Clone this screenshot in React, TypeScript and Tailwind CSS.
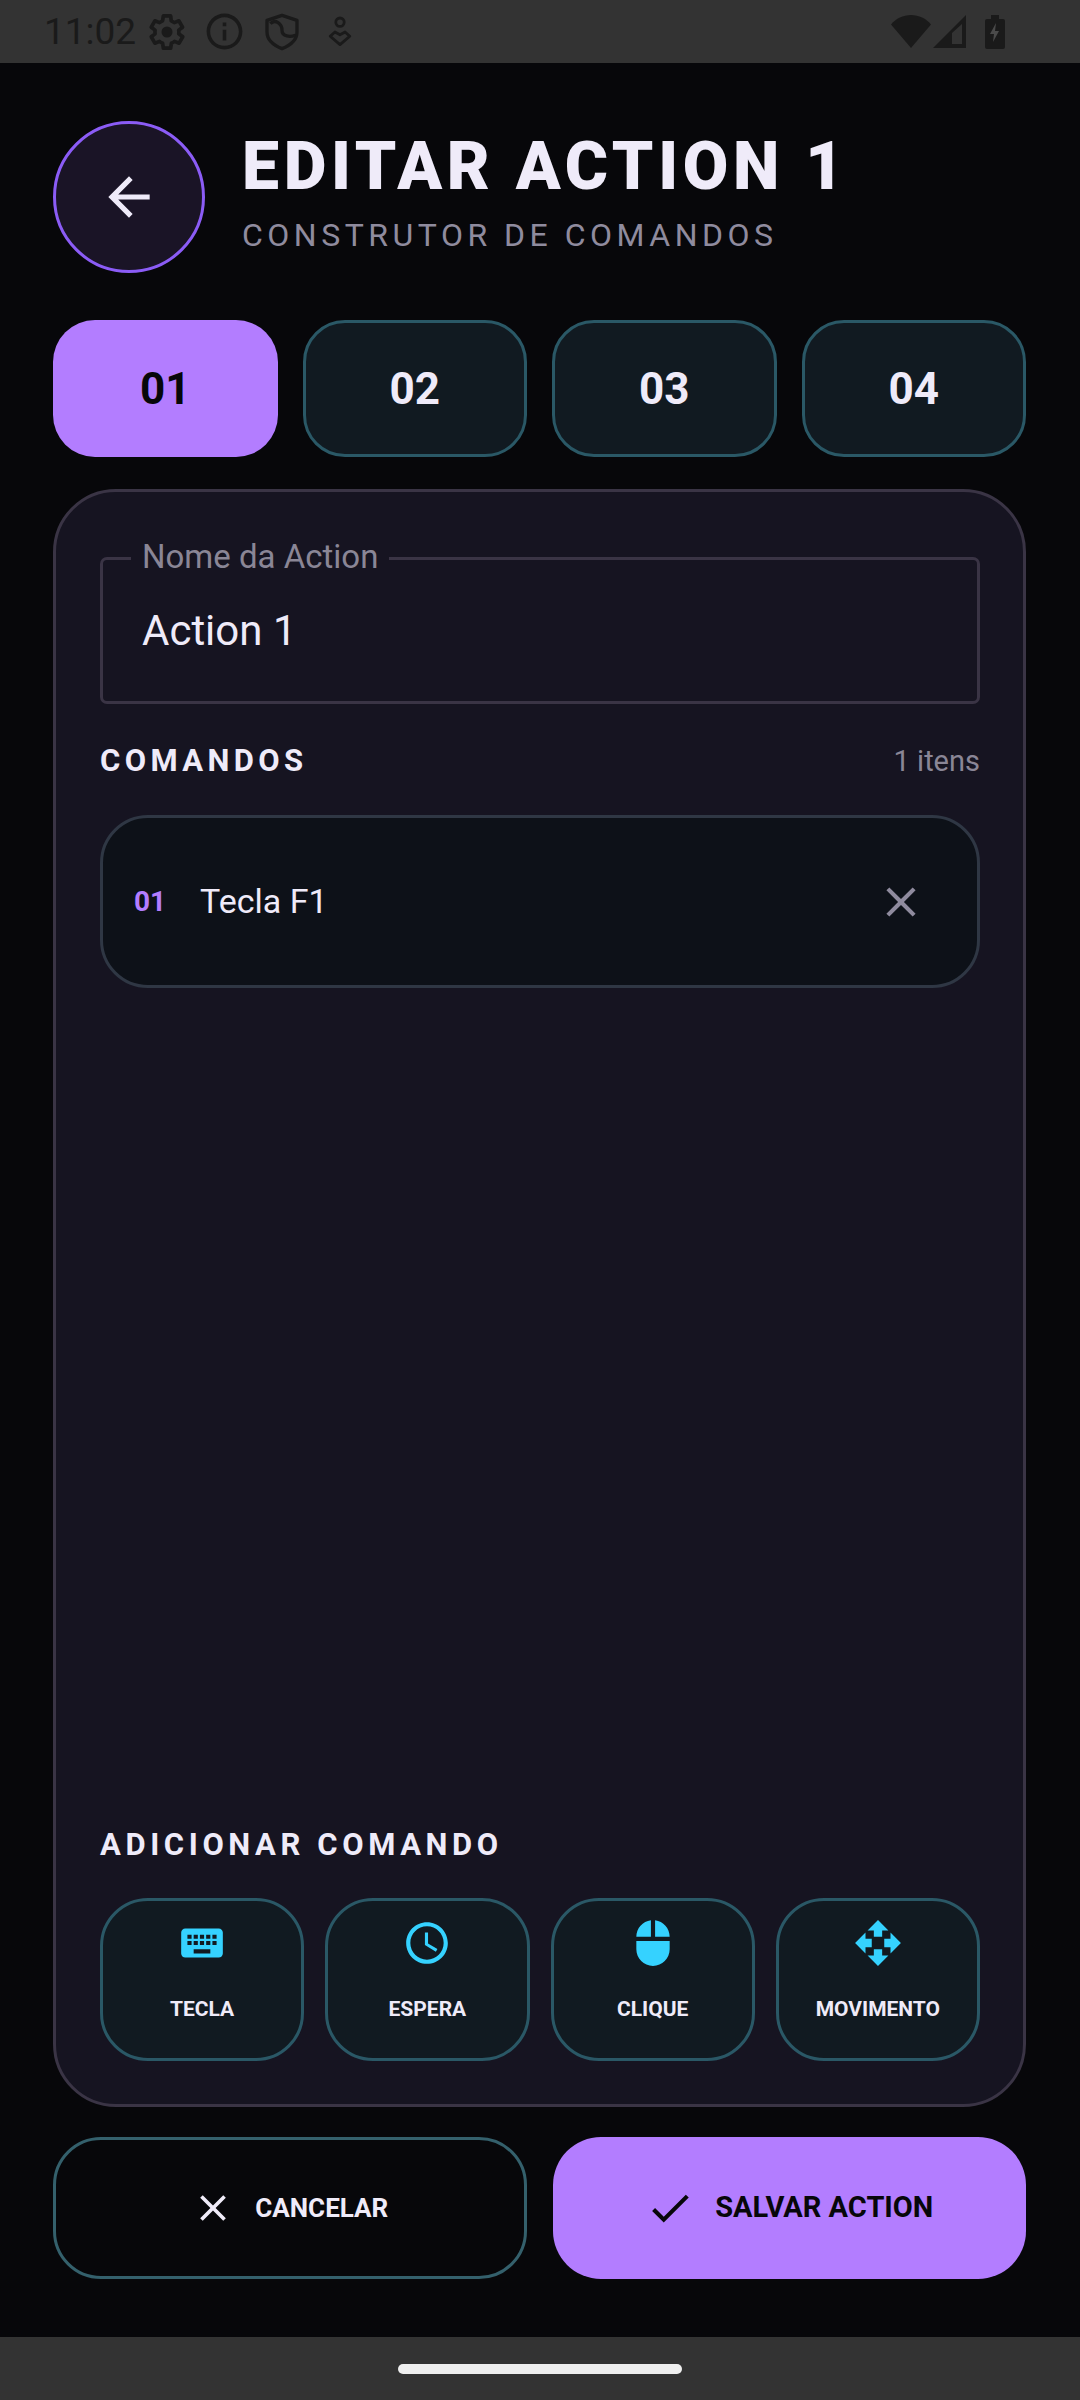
import React from "react";
import { MdArrowBack, MdClose, MdCheck, MdKeyboard, MdAccessTime, MdMouse, MdOpenWith, MdInfoOutline } from "react-icons/md";

function StatusIcons() {
  return (
    <div className="flex items-center text-[#1a1a1a]">
      <svg width="44" height="44" viewBox="1 0 24 24" className="ml-[9px]" fill="none">
        <path d="M19.4 13a7.5 7.5 0 0 0 0-2l2.100-1.600-2-3.500-2.500 1a7.500 7.500 0 0 0-1.700-1L15 3.200h-4l-.4 2.700a7.500 7.500 0 0 0-1.700 1l-2.500-1-2 3.500L6.500 11a7.500 7.500 0 0 0 0 2l-2.100 1.600 2 3.500 2.500-1a7.500 7.500 0 0 0 1.700 1l.4 2.700h4l.4-2.700a7.500 7.500 0 0 0 1.700-1l2.500 1 2-3.500z" stroke="currentColor" strokeWidth="2" strokeLinejoin="round" />
        <circle cx="13" cy="12" r="3" fill="currentColor" />
      </svg>
      <MdInfoOutline size={43} className="ml-[14px]" />
      <svg width="40" height="40" viewBox="0 0 24 24" className="ml-[16px]" fill="none" stroke="currentColor" strokeWidth="2">
        <path d="M12 2 21 5v7c0 5-4 8-9 10-5-2-9-5-9-10V5z" strokeLinejoin="round" />
        <path d="M5 7c3-3 7 0 7 4s5 4 8 3" />
      </svg>
      <svg width="28" height="34" viewBox="0 0 20 24" className="ml-[24px]" fill="none" stroke="currentColor" strokeWidth="2">
        <circle cx="10" cy="5" r="3" />
        <path d="M10 21 3 15l3.400-3L10 14l3.600-2 3.400 3z" strokeLinejoin="round" />
      </svg>
    </div>
  );
}

function Tab({ label, active }: { label: string; active?: boolean }) {
  return (
    <div
      className={
        active
          ? "h-[137px] rounded-[42px] bg-[#b37dff] text-[#07070a] flex items-center justify-center text-[44px] font-bold"
          : "h-[137px] rounded-[42px] bg-[#111a21] border-[3px] border-[#2a5866] text-[#efebf9] flex items-center justify-center text-[44px] font-bold"
      }
    >
      {label}
    </div>
  );
}

function AddCard({ label, children }: { label: string; children: React.ReactNode }) {
  return (
    <div className="h-[163px] rounded-[48px] bg-[#111a21] border-[3px] border-[#2a5866] flex flex-col items-center pt-[14px] text-[#efebf9]">
      <div className="h-[56px] flex items-center justify-center text-[#35d2ff]">{children}</div>
      <div className="mt-[24px] text-[21px] leading-[28px] font-bold">{label}</div>
    </div>
  );
}

export default function App() {
  return (
    <div className="w-[1080px] h-[2400px] bg-[#07070a] flex flex-col text-[#efebf9]" style={{ fontFamily: "Roboto, sans-serif" }}>
      <div className="h-[63px] bg-[#333333] flex items-center justify-between pl-[44px] pr-[75px] shrink-0">
        <div className="flex items-center">
          <span className="text-[37px] leading-none text-[#1a1a1a]">11:02</span>
          <StatusIcons />
        </div>
        <div className="flex items-center text-[#1a1a1a]">
          <svg width="40" height="34" viewBox="0 0 40 34">
            <path d="M0 9.500C5 3.500 12 0 20 0s15 3.500 20 9.500L20 33z" fill="currentColor" />
          </svg>
          <svg width="34" height="34" viewBox="0 0 34 34" className="ml-[2px]">
            <path fillRule="evenodd" d="M33 0v33H0zM19 29h10V9l-10 9z" fill="currentColor" />
          </svg>
          <svg width="20" height="34" viewBox="0 0 20 34" className="ml-[18px]">
            <path d="M6 0h8v4h4a2 2 0 0 1 2 2v26a2 2 0 0 1-2 2H2a2 2 0 0 1-2-2V6a2 2 0 0 1 2-2h4z" fill="currentColor" />
            <path d="M11 8 5 19h4l-1 8 6-11h-4z" fill="#4a4a4a" />
          </svg>
        </div>
      </div>

      <div className="flex-1 flex flex-col pl-[53px] pr-[54px] pt-[58px] pb-[58px] min-h-0">
        <div className="flex items-center">
          <div className="w-[152px] h-[152px] rounded-full bg-[#1a1426] border-[3px] border-[#8b5cf6] flex items-center justify-center text-[#efebf9] shrink-0">
            <MdArrowBack size={62} />
          </div>
          <div className="ml-[37px] flex flex-col -mt-[12px]">
            <div className="text-[66px] leading-[78px] font-black tracking-[4.7px] text-[#efebf9]">EDITAR ACTION 1</div>
            <div className="mt-[9px] text-[32px] leading-[40px] tracking-[4.5px] text-[#8f8b9e]">CONSTRUTOR DE COMANDOS</div>
          </div>
        </div>

        <div className="mt-[47px] grid grid-cols-4 gap-[25px]">
          <Tab label="01" active />
          <Tab label="02" />
          <Tab label="03" />
          <Tab label="04" />
        </div>

        <div className="mt-[32px] flex-1 flex flex-col rounded-[63px] bg-[#161421] border-[3px] border-[#3a3445] pl-[44px] pr-[43px] pt-[65px] pb-[43px] min-h-0">
          <div className="relative h-[147px] border-[3px] border-[#3a3445] rounded-[7px] flex items-center pl-[39px] text-[42px] text-[#efebf9]">
            Action 1
            <span className="absolute left-[28px] top-[-23px] bg-[#161421] px-[11px] text-[33px] leading-[40px] text-[#8a8696]">Nome da Action</span>
          </div>

          <div className="mt-[39px] h-[36px] flex items-center justify-between">
            <span className="text-[31px] font-bold tracking-[4.4px] text-[#efebf9]">COMANDOS</span>
            <span className="text-[29px] pt-[2px] text-[#8a8696]">1 itens</span>
          </div>

          <div className="mt-[36px] h-[173px] rounded-[48px] bg-[#0d1118] border-[3px] border-[#2f3744] flex items-center pl-[31px] pr-[51px]">
            <span className="text-[28px] font-bold text-[#b37dff] w-[66px]">01</span>
            <span className="text-[34px] text-[#efebf9]">Tecla F1</span>
            <MdClose size={50} className="ml-auto text-[#8f8b9e]" />
          </div>

          <div className="mt-auto h-[36px] flex items-center">
            <span className="text-[31px] font-bold tracking-[4.6px] text-[#efebf9]">ADICIONAR COMANDO</span>
          </div>
          <div className="mt-[35px] grid grid-cols-4 gap-[21px]">
            <AddCard label="TECLA"><MdKeyboard size={50} /></AddCard>
            <AddCard label="ESPERA"><MdAccessTime size={50} /></AddCard>
            <AddCard label="CLIQUE"><MdMouse size={50} /></AddCard>
            <AddCard label="MOVIMENTO"><MdOpenWith size={50} /></AddCard>
          </div>
        </div>

        <div className="mt-[30px] grid grid-cols-2 gap-[26px]">
          <div className="h-[142px] rounded-[48px] border-[3px] border-[#34606c] flex items-center justify-center text-[#efebf9] gap-[20px]">
            <MdClose size={44} />
            <span className="text-[26px] font-bold">CANCELAR</span>
          </div>
          <div className="h-[142px] rounded-[48px] bg-[#b37dff] flex items-center justify-center text-[#07070a] gap-[20px]">
            <MdCheck size={50} />
            <span className="text-[29px] font-bold">SALVAR ACTION</span>
          </div>
        </div>
      </div>

      <div className="h-[63px] bg-[#333333] flex items-center justify-center shrink-0">
        <div className="w-[284px] h-[10px] rounded-full bg-[#efefef]" />
      </div>
    </div>
  );
}
